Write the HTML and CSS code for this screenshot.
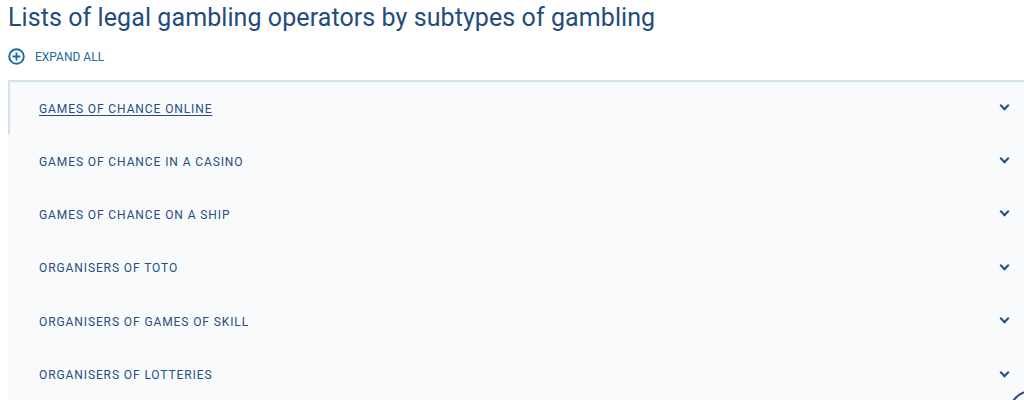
FILE: index.html
```html
<!DOCTYPE html>
<html lang="en">
<head>
  <meta charset="UTF-8" />
  <title>Gambling operators</title>
  <link rel="stylesheet" href="styles.css">
</head>
<body>
  <div class="container">
    <h1>Lists of legal gambling operators by subtypes of gambling</h1>

    <button class="expand-all">
      <svg width="17" height="17" viewBox="0 0 17 17" fill="none" stroke="#1d6c98" stroke-width="1.9">
        <circle cx="8.5" cy="8.5" r="7.3"/>
        <path d="M8.5 4.6v7.8M4.6 8.5h7.8"/>
      </svg>
      <span>EXPAND ALL</span>
    </button>

    <div class="accordion">
      <div class="acc-item active">
        <a href="#">GAMES OF CHANCE ONLINE</a>
        <span class="chevron"></span>
      </div>
      <div class="acc-item">
        <a href="#">GAMES OF CHANCE IN A CASINO</a>
        <span class="chevron"></span>
      </div>
      <div class="acc-item">
        <a href="#">GAMES OF CHANCE ON A SHIP</a>
        <span class="chevron"></span>
      </div>
      <div class="acc-item">
        <a href="#">ORGANISERS OF TOTO</a>
        <span class="chevron"></span>
      </div>
      <div class="acc-item">
        <a href="#">ORGANISERS OF GAMES OF SKILL</a>
        <span class="chevron"></span>
      </div>
      <div class="acc-item">
        <a href="#">ORGANISERS OF LOTTERIES</a>
        <span class="chevron"></span>
      </div>
    </div>
  </div>

  <div class="float-btn"></div>
</body>
</html>
```

FILE: styles.css
```css
body {
  font-family: Roboto, Arial, sans-serif;
  background-color: #fff;
  margin: 0;
  padding: 0;
  overflow: hidden;
}
.container {
  padding: 0 0 0 8px;
}
h1 {
  font-size: 25px;
  font-weight: 400;
  color: #234b7e;
  margin: 0;
  padding-top: 3px;
  line-height: 30px;
  letter-spacing: 0.08px;
}
.expand-all {
  display: flex;
  align-items: center;
  gap: 10px;
  background: none;
  border: 0;
  padding: 0;
  margin-top: 15px;
  height: 17px;
  font-family: Roboto, Arial, sans-serif;
  font-size: 12px;
  letter-spacing: 0;
  color: #1d6c98;
  cursor: pointer;
}
.accordion {
  margin-top: 15px;
  border-top: 2px solid #d3e4ee;
}
.acc-item {
  display: flex;
  align-items: center;
  justify-content: space-between;
  height: 52.4px;
  padding: 0 16px 0 31px;
  background-color: #f9fafb;
  border-bottom: 1px solid #fdfdfe;
}
.acc-item.active {
  border-left: 2px solid #d3e4ee;
  padding-left: 29px;
  padding-top: 1px;
  height: 51.4px;
}
.acc-item a {
  font-size: 12px;
  letter-spacing: 0.9px;
  color: #264d84;
  text-decoration: none;
}
.acc-item.active a {
  text-decoration: underline;
  text-underline-offset: 2px;
}
.chevron {
  width: 5px;
  height: 5px;
  border-right: 2px solid #234b7e;
  border-bottom: 2px solid #234b7e;
  transform: rotate(45deg);
  margin-top: -6px;
}
.float-btn {
  position: fixed;
  left: 1008px;
  top: 390px;
  width: 44px;
  height: 44px;
  border: 2px solid #234b7e;
  border-radius: 50%;
}
```
